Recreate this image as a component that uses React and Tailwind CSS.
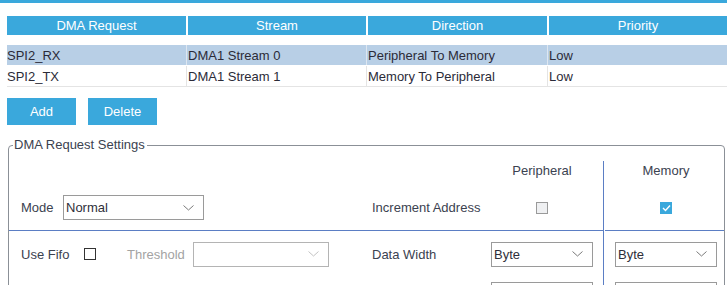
import { Fragment } from 'react'

const rows = [
  { request: 'SPI2_RX', stream: 'DMA1 Stream 0', direction: 'Peripheral To Memory', priority: 'Low', selected: true },
  { request: 'SPI2_TX', stream: 'DMA1 Stream 1', direction: 'Memory To Peripheral', priority: 'Low', selected: false },
]

const widths = ['w-[179px]', 'w-[180px]', 'w-[181px]', 'w-[180px]']

function Chevron({ light }) {
  return (
    <svg width="11" height="6" viewBox="0 0 11 6" className="shrink-0">
      <polyline
        points="0.5,0.5 5.5,5 10.5,0.5"
        fill="none"
        stroke={light ? '#c4c4c4' : '#7a7a7a'}
        strokeWidth="1"
      />
    </svg>
  )
}

function Select({ value, width, disabled }) {
  return (
    <div
      className={`flex h-[25px] items-center justify-between border pl-[2px] pr-[9px] ${width} ${
        disabled ? 'border-[#b4b4b4]' : 'border-[#9a9a9a]'
      }`}
    >
      <span className="text-[#2f2f3a]">{value}</span>
      <Chevron light={disabled} />
    </div>
  )
}

function Checkbox({ checked, disabled }) {
  if (checked) {
    return (
      <div className="flex h-[12px] w-[12px] items-center justify-center bg-[#3aa8dc]">
        <svg width="9" height="8" viewBox="0 0 9 8">
          <polyline points="1,4 3.5,6.5 8,1.5" fill="none" stroke="white" strokeWidth="1.4" />
        </svg>
      </div>
    )
  }
  return (
    <div
      className={`h-[12px] w-[12px] border ${
        disabled ? 'border-[#9a9a9a] bg-[#eff0f2]' : 'border-[#333] bg-white'
      }`}
    />
  )
}

export default function App() {
  return (
    <div className="h-[285px] w-[727px] overflow-hidden bg-white font-['Liberation_Sans',Arial,sans-serif] text-[13px] leading-[15px]">
      <div className="h-[3px] bg-[#3aa8dc]" />

      {/* DMA request table */}
      <div className="mt-[13px] pl-[7px]">
        <div className="grid grid-cols-[179px_178px_179px_178px] gap-[2px]">
          {['DMA Request', 'Stream', 'Direction', 'Priority'].map((h) => (
            <div key={h} className="flex h-[19px] items-center justify-center bg-[#3aa8dc] text-white">
              {h}
            </div>
          ))}
        </div>

        <div className="mt-[10px] w-[720px]">
          {rows.map((row) => {
            const cells = [row.request, row.stream, row.direction, row.priority]
            return (
              <div
                key={row.request}
                className={`flex h-[21px] border-b text-[#2b2b38] ${
                  row.selected ? 'border-white bg-[#b8cfe6]' : 'border-[#e4e4e4] bg-white'
                }`}
              >
                {cells.map((c, i) => (
                  <div
                    key={i}
                    className={`flex items-center ${widths[i]} ${
                      i > 0 ? (row.selected ? 'border-l border-[#dde6f0] pl-[1px]' : 'border-l border-[#e4e4e4] pl-[1px]') : ''
                    }`}
                  >
                    {c}
                  </div>
                ))}
              </div>
            )
          })}
        </div>

        <div className="mt-[11px] flex gap-[12px]">
          <button className="h-[27px] w-[69px] bg-[#3aa8dc] text-white">Add</button>
          <button className="h-[27px] w-[69px] bg-[#3aa8dc] text-white">Delete</button>
        </div>
      </div>

      {/* DMA request settings */}
      <fieldset className="ml-[8px] mt-[12px] w-[717px] rounded-[4px] border border-[#8b9097] px-0 pt-[8px] text-[#3b4250]">
        <legend className="ml-[4px] pl-[1px] pr-[2px] leading-[16px]">DMA Request Settings</legend>

        <div className="flex">
          {/* left part */}
          <div className="w-[594px]">
            <div className="flex h-[24px] pt-[2px]">
              <div className="w-[363px]" />
              <div className="w-[119px]" />
              <div className="w-[102px] text-center">Peripheral</div>
            </div>

            <div className="flex h-[45px] items-center">
              <div className="flex w-[363px] items-center pl-[12px]">
                <span className="w-[42px]">Mode</span>
                <Select value="Normal" width="w-[141px]" />
              </div>
              <div className="w-[119px]">Increment Address</div>
              <div className="flex w-[102px] justify-center">
                <Checkbox disabled />
              </div>
            </div>

            <div className="flex h-[47px] items-center border-t border-[#5b7ec4]">
              <div className="flex w-[363px] items-center pl-[12px]">
                <span className="w-[63px]">Use Fifo</span>
                <Checkbox />
                <span className="ml-[31px] w-[66px] text-[#a3a3a3]">Threshold</span>
                <Select value="" width="w-[136px]" disabled />
              </div>
              <div className="w-[119px]">Data Width</div>
              <Select value="Byte" width="w-[102px]" />
            </div>

            <div className="flex pt-[5px]">
              <div className="w-[363px]" />
              <div className="w-[119px]" />
              <Select value="" width="w-[102px]" />
            </div>
          </div>

          {/* memory column */}
          <div className="w-[121px] border-l border-[#5b7ec4]">
            <div className="h-[24px] pt-[2px] pl-[11px]">
              <div className="w-[102px] text-center">Memory</div>
            </div>
            <div className="flex h-[45px] items-center pl-[11px]">
              <div className="flex w-[102px] justify-center">
                <Checkbox checked />
              </div>
            </div>
            <div className="ml-[1px] flex h-[47px] items-center border-t border-[#5b7ec4] pl-[10px]">
              <Select value="Byte" width="w-[102px]" />
            </div>
            <div className="pt-[5px] pl-[11px]">
              <Select value="" width="w-[102px]" />
            </div>
          </div>
        </div>
      </fieldset>
    </div>
  )
}
